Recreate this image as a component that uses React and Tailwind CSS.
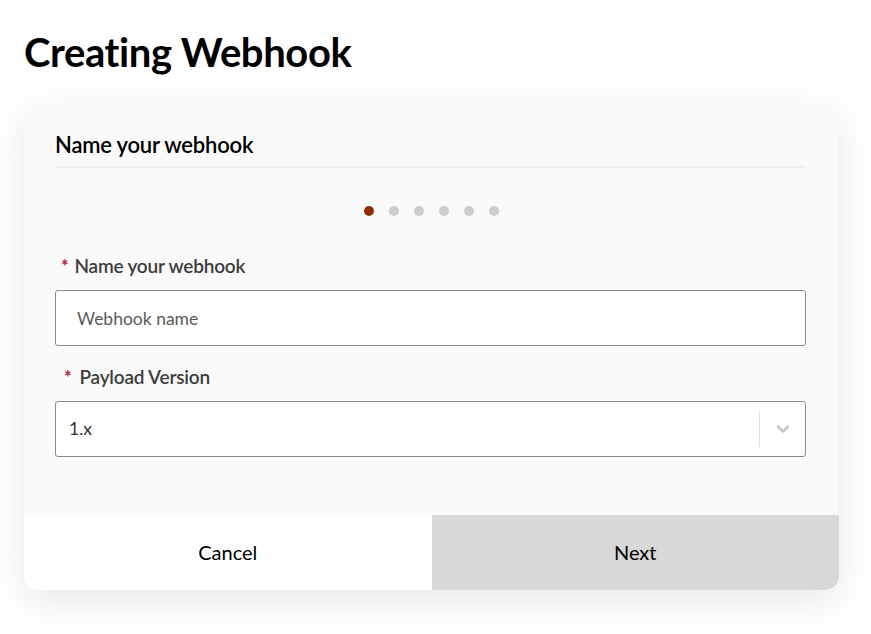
import { ChevronDown } from 'lucide-react';

function Dots({ total, active }) {
  return (
    <div className="flex justify-center gap-[15px] h-[10px] mt-[38px] pl-[2px]">
      {Array.from({ length: total }).map((_, i) => (
        <span
          key={i}
          className={`w-[10px] h-[10px] rounded-full ${i === active ? 'bg-[#8a3000]' : 'bg-[#cdcdcf]'}`}
        ></span>
      ))}
    </div>
  );
}

function FieldLabel({ children, gap }) {
  return (
    <div className="flex items-center h-[24px] pl-[6px] text-[19px] font-semibold text-[#3c3c3c] tracking-[-0.2px]">
      <span className={`text-[#b3203a] text-[18px] font-bold leading-none ${gap}`}>*</span>
      <span>{children}</span>
    </div>
  );
}

export default function App() {
  return (
    <div className="min-h-screen bg-white px-[24px] pt-[28px] pb-[44px]" style={{ fontFamily: 'Lato, "Noto Sans", sans-serif' }}>
      {/* Title */}
      <h1 className="text-[40px] leading-[48px] font-bold text-black tracking-[-0.4px]">Creating Webhook</h1>

      {/* Card */}
      <div className="mt-[25px] w-[815px] rounded-[14px] bg-[#fafafa] overflow-hidden shadow-[0_12px_40px_rgba(0,0,0,0.09)]">
        <div className="pl-[31px] pr-[33px] pt-[32px] pb-[58px]">
          <h2 className="text-[22px] leading-[24px] font-semibold text-black pb-[9px] border-b-2 border-[#ededf2] tracking-[-0.2px]">
            Name your webhook
          </h2>

          <Dots total={6} active={0} />

          <div className="mt-[38px]">
            <FieldLabel gap="mr-[6px]">Name your webhook</FieldLabel>
            <input
              type="text"
              placeholder="Webhook name"
              className="mt-[12px] w-full h-[56px] bg-white border border-[#8a8a8a] rounded-[3px] px-[21px] text-[17.5px] text-[#333] placeholder:text-[#5a5a5a] outline-none"
            />
          </div>

          <div className="mt-[19px]">
            <FieldLabel gap="ml-[3px] mr-[8px]">Payload Version</FieldLabel>
            <div className="mt-[12px] w-full h-[56px] bg-white border border-[#8a8a8a] rounded-[3px] flex items-center">
              <span className="flex-1 pl-[13px] text-[17.5px] text-[#333]">1.x</span>
              <span className="w-px h-[35px] bg-[#dedede]"></span>
              <span className="w-[45px] flex justify-center text-[#c4c4c4]">
                <ChevronDown size={20} strokeWidth={3} />
              </span>
            </div>
          </div>
        </div>

        {/* Footer buttons */}
        <div className="grid grid-cols-2 h-[75px]">
          <button className="bg-white text-[20px] text-black pb-[2px]">Cancel</button>
          <button className="bg-[#d8d8d8] text-[20px] text-black pb-[2px]">Next</button>
        </div>
      </div>
    </div>
  );
}
